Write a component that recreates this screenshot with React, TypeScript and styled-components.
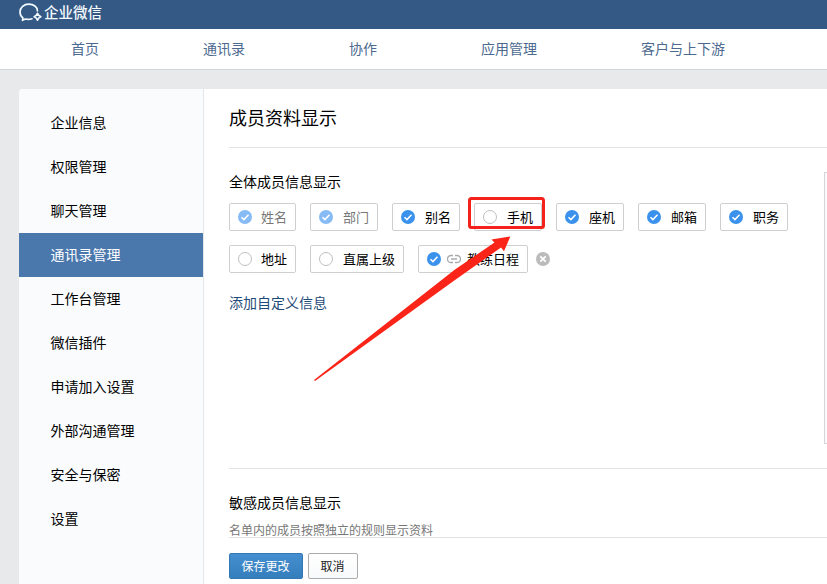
import React from "react";
import styled, { createGlobalStyle } from "styled-components";

const Global = createGlobalStyle`
  * { box-sizing: border-box; }
  body {
    margin: 0;
    overflow: hidden;
    background: #e7e9eb;
    color: #000;
    font: 14px/20px "Noto Sans CJK SC", sans-serif;
  }
  button { font-family: inherit; }
`;

const Page = styled.div`
  position: relative;
  width: 827px;
  height: 584px;
  overflow: hidden;
  display: flex;
  flex-direction: column;
`;

const TopBar = styled.header`
  flex: none;
  height: 29px;
  padding: 0 0 4px 18px;
  display: flex;
  align-items: center;
  gap: 1px;
  background: #345985;
  color: #f4fbff;
  font-size: 14.5px;
  font-weight: 500;
  line-height: 20px;
`;

const Brand = styled.span`
  padding-bottom: 2px;
`;

const Nav = styled.nav`
  flex: none;
  height: 41px;
  padding: 0 0 2px 71px;
  display: flex;
  align-items: center;
  gap: 104px;
  background: #fff;
  border-bottom: 1px solid #d3d6d9;
  color: #4c6a8f;
  white-space: nowrap;
`;

const NavItem = styled.a``;

const Card = styled.div`
  flex: 1;
  margin: 19px 0 0 19px;
  display: flex;
  background: #fff;
  border-top-left-radius: 4px;
  overflow: hidden;
`;

const Sidebar = styled.aside`
  flex: none;
  width: 185px;
  padding-top: 12px;
  background: #f9fbfd;
  border-right: 1px solid #e4e8eb;
`;

const SideItem = styled.div<{ $active?: boolean }>`
  height: 44px;
  padding-left: 31.5px;
  line-height: 42px;
  color: ${(p) => (p.$active ? "#fff" : "#000")};
  background: ${(p) => (p.$active ? "#4a77ac" : "transparent")};
`;

const Main = styled.main`
  flex: 1;
  min-width: 0;
  padding-left: 25px;
  display: flex;
  flex-direction: column;
`;

const Title = styled.h1`
  margin: 0;
  height: 59px;
  padding-top: 16px;
  border-bottom: 1px solid #e2e4e6;
  font-size: 18px;
  font-weight: 400;
  line-height: 24px;
`;

const MemberSection = styled.section`
  height: 321px;
  border-bottom: 1px solid #e2e4e6;
  display: flex;
  justify-content: space-between;
`;

const Fields = styled.div`
  padding-top: 23px;
`;

const SectionTitle = styled.h2`
  margin: 0;
  font-size: 14px;
  line-height: 20px;
  font-weight: 400;
`;

const ChipRow = styled.div<{ $top: number }>`
  display: flex;
  align-items: center;
  gap: 14px;
  margin-top: ${(p) => p.$top}px;
`;

const Chip = styled.label<{ $width: number; $disabled?: boolean }>`
  width: ${(p) => p.$width}px;
  height: 28px;
  padding: 0 8px;
  display: flex;
  align-items: center;
  justify-content: space-between;
  border: 1px solid #cdcfd1;
  border-radius: 2px;
  color: ${(p) => (p.$disabled ? "#777" : "#000")};
  font-size: 13px;
  line-height: 26px;
  white-space: nowrap;
  svg { flex: none; }
`;

const ClearButton = styled.span`
  display: flex;
  margin-left: -6px;
`;

const AddLink = styled.a`
  display: block;
  margin-top: 19px;
  color: #1f4b78;
`;

const Preview = styled.div`
  width: 3px;
  height: 272px;
  margin-top: 24px;
  border: 1px solid #d5d6d8;
  border-right: 0;
  background: #fafafc;
`;

const SensitiveSection = styled.section`
  height: 69px;
  padding-top: 23px;
  border-bottom: 1px solid #dfe1e3;
`;

const Hint = styled.p`
  margin: 9px 0 0;
  color: #777;
  font-size: 12px;
  line-height: 18px;
`;

const Actions = styled.div`
  display: flex;
  gap: 5px;
  padding-top: 15px;
`;

const Button = styled.button<{ $primary?: boolean }>`
  width: ${(p) => (p.$primary ? 74 : 50)}px;
  height: 26px;
  padding: 0 1px 1px 0;
  border: 1px solid ${(p) => (p.$primary ? "#3477b5" : "#a9abad")};
  border-radius: 2px;
  background: ${(p) => (p.$primary ? "linear-gradient(#458fd0, #357ebc)" : "linear-gradient(#fff, #f8f9fa)")};
  color: ${(p) => (p.$primary ? "#fff" : "#222")};
  font-size: 12px;
  line-height: 22px;
`;

const Annotation = styled.svg`
  position: absolute;
  left: 0;
  top: 0;
  pointer-events: none;
`;

const Logo = () => (
  <svg width="25" height="25" viewBox="0 0 25 25" fill="none" stroke="#f0faff" strokeWidth="1.7" strokeLinecap="round" strokeLinejoin="round">
    <path d="M19.400 10.800C19.400 7 15.600 4.100 10.800 4.100S2 7.400 2 11.900c0 2.500 1.100 4.500 2.900 5.900L4.500 20.300l3-1.300c2.100.6 4.500.5 6.500-.2" />
    <path d="M19.500 13.400q.9 2.500 3.400 3.400-2.500.9-3.400 3.400-.9-2.500-3.400-3.400 2.500-.9 3.400-3.400z" />
  </svg>
);

const Check = ({ checked, disabled }: { checked: boolean; disabled?: boolean }) => (
  <svg width="14" height="14" viewBox="0 0 14 14" fill="none">
    {checked ? (
      <>
        <circle cx="7" cy="7" r="7" fill={disabled ? "#86bbf6" : "#3a92ec"} />
        <path d="M3.500 7.200l2.400 2.400 4.600-4.900" stroke="#fff" strokeWidth="1.500" />
      </>
    ) : (
      <circle cx="7" cy="7" r="6.500" stroke="#bcbec0" />
    )}
  </svg>
);

const LinkIcon = () => (
  <svg width="14" height="10" viewBox="0 0 14 10" fill="none" stroke="#a8abae" strokeWidth="1.300">
    <path d="M6 1.500H4a3.500 3.500 0 0 0 0 7h2M8 1.500h2a3.500 3.500 0 0 1 0 7H8M4 5h6" />
  </svg>
);

const ClearIcon = () => (
  <svg width="14" height="14" viewBox="0 0 14 14">
    <circle cx="7" cy="7" r="7" fill="#bbb" />
    <path d="M4.300 4.300l5.400 5.400M9.700 4.300L4.300 9.700" stroke="#fff" strokeWidth="1.800" />
  </svg>
);

type Field = { label: string; width: number; checked?: boolean; disabled?: boolean; linked?: boolean };

const firstRow: Field[] = [
  { label: "姓名", width: 67, checked: true, disabled: true },
  { label: "部门", width: 68, checked: true, disabled: true },
  { label: "别名", width: 68, checked: true },
  { label: "手机", width: 68 },
  { label: "座机", width: 68, checked: true },
  { label: "邮箱", width: 68, checked: true },
  { label: "职务", width: 68, checked: true },
];

const secondRow: Field[] = [
  { label: "地址", width: 67 },
  { label: "直属上级", width: 94 },
  { label: "教练日程", width: 110, checked: true, linked: true },
];

const sideItems = ["企业信息", "权限管理", "聊天管理", "通讯录管理", "工作台管理", "微信插件", "申请加入设置", "外部沟通管理", "安全与保密", "设置"];

const FieldChip = ({ label, width, checked = false, disabled, linked }: Field) => (
  <Chip $width={width} $disabled={disabled}>
    <Check checked={checked} disabled={disabled} />
    {linked && <LinkIcon />}
    <span>{label}</span>
  </Chip>
);

export default function App() {
  return (
    <Page>
      <Global />
      <TopBar><Logo /><Brand>企业微信</Brand></TopBar>
      <Nav>
        {["首页", "通讯录", "协作", "应用管理", "客户与上下游"].map((t) => <NavItem key={t}>{t}</NavItem>)}
      </Nav>
      <Card>
        <Sidebar>
          {sideItems.map((t) => <SideItem key={t} $active={t === "通讯录管理"}>{t}</SideItem>)}
        </Sidebar>
        <Main>
          <Title>成员资料显示</Title>
          <MemberSection>
            <Fields>
              <SectionTitle>全体成员信息显示</SectionTitle>
              <ChipRow $top={12}>{firstRow.map((f) => <FieldChip key={f.label} {...f} />)}</ChipRow>
              <ChipRow $top={14}>
                {secondRow.map((f) => <FieldChip key={f.label} {...f} />)}
                <ClearButton><ClearIcon /></ClearButton>
              </ChipRow>
              <AddLink>添加自定义信息</AddLink>
            </Fields>
            <Preview />
          </MemberSection>
          <SensitiveSection>
            <SectionTitle>敏感成员信息显示</SectionTitle>
            <Hint>名单内的成员按照独立的规则显示资料</Hint>
          </SensitiveSection>
          <Actions>
            <Button $primary>保存更改</Button>
            <Button>取消</Button>
          </Actions>
        </Main>
      </Card>
      <Annotation width="827" height="584" viewBox="0 0 827 584">
        <rect x="469.500" y="198.500" width="74" height="29" rx="2" fill="none" stroke="#f5221c" strokeWidth="3" />
        <path d="M314 380L455 269.500L494.500 242.500L491.500 239.500L510.300 236.500L504 251.300L501 247.500L455 280L315 381z" fill="#fb2418" />
      </Annotation>
    </Page>
  );
}
